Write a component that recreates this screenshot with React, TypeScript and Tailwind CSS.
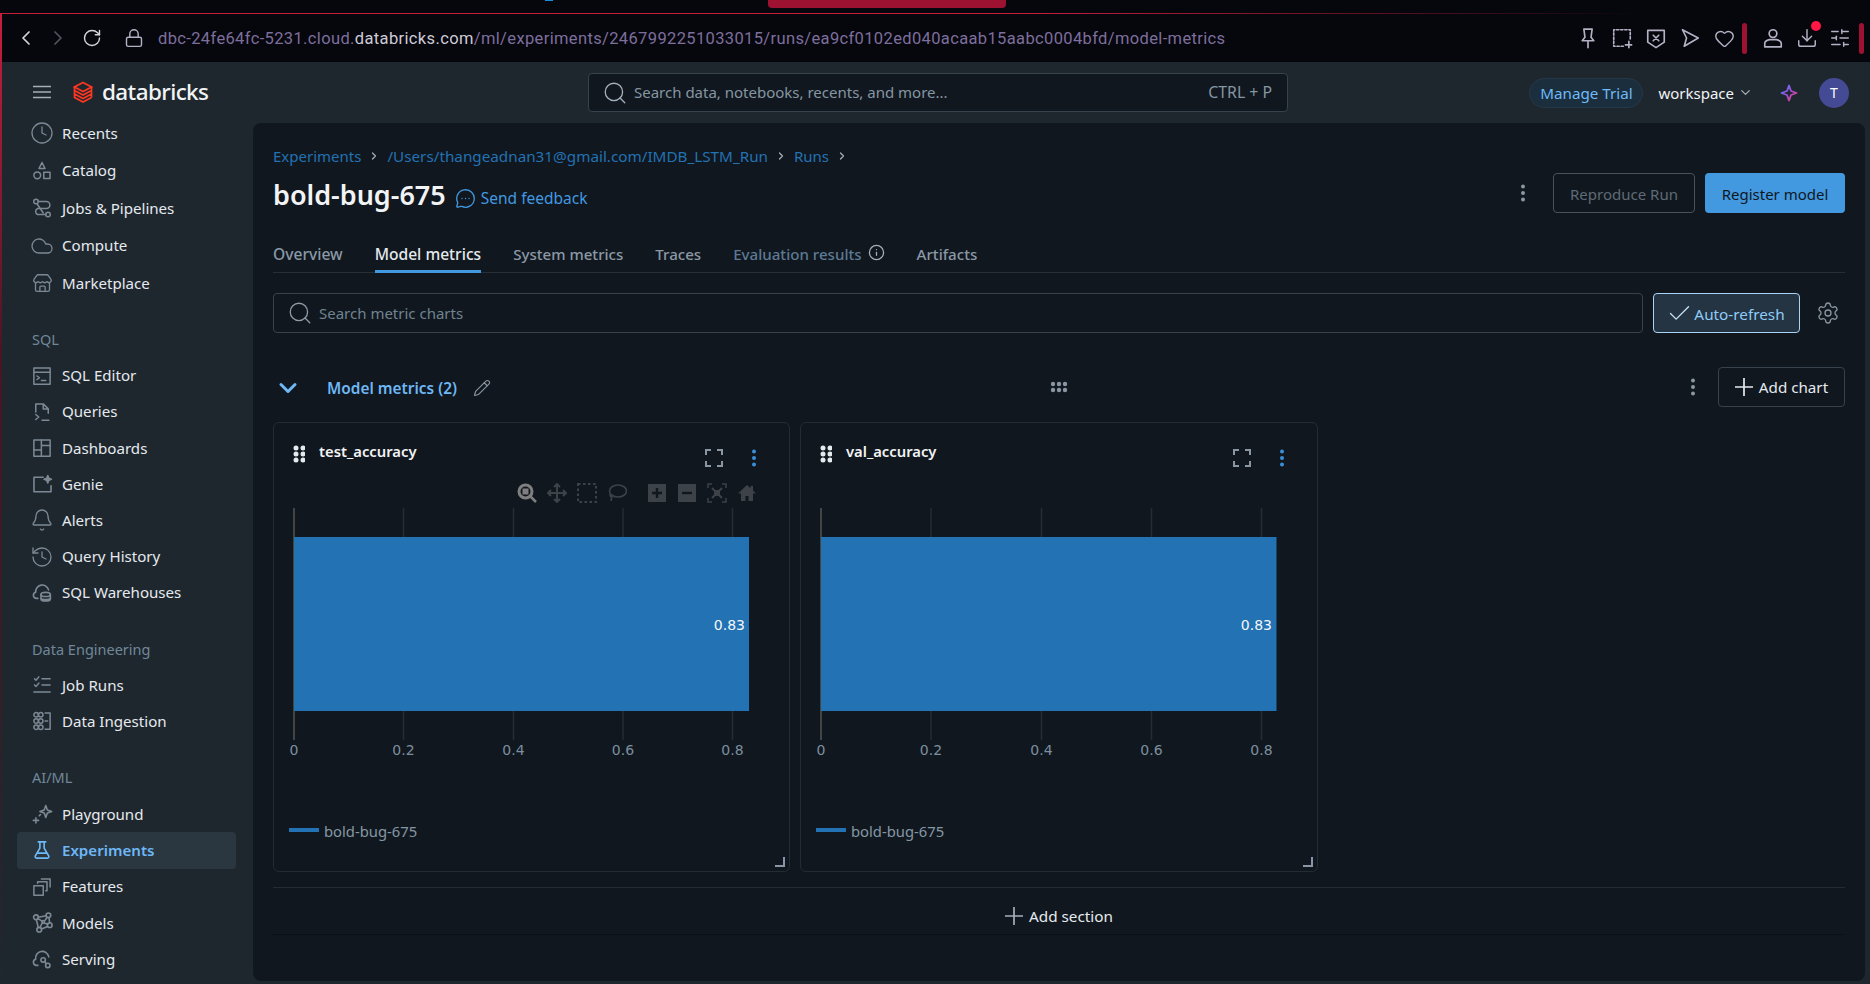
import type { ReactNode } from 'react';
import {
  Bell, Check, ChevronDown, ChevronLeft, ChevronRight, Clock, Cloud, Download, Heart, History, Info,
  Lock, MessageCircleMore, Pencil, RotateCw, Search, Settings, SlidersHorizontal, Store,
} from 'lucide-react';

function Ico({ children, className = 'w-5 h-5' }: { children: ReactNode; className?: string }) {
  return (
    <svg viewBox="0 0 16 16" fill="none" stroke="currentColor" strokeWidth="1.2" strokeLinecap="round" strokeLinejoin="round" className={`shrink-0 ${className}`}>
      {children}
    </svg>
  );
}

const CatalogIcon = () => (
  <Ico><path d="M8 1.2 10.4 6H5.6Z" /><circle cx="4.2" cy="11.4" r="2.7" /><rect x="9.4" y="9" width="5" height="5" /></Ico>
);
const JobsIcon = () => (
  <Ico><circle cx="3.2" cy="2.8" r="1.8" /><circle cx="12.8" cy="13.2" r="1.8" /><path d="M5 2.8h6.5a2.8 2.8 0 0 1 0 5.6h-7a2.6 2.6 0 0 0 0 4.8H11" /><path d="M4 4.6 9 12" /></Ico>
);
const EditorIcon = () => (
  <Ico><rect x="1.5" y="1.5" width="13" height="13" /><path d="M1.5 5h13M4 8l2 1.4L4 10.8M7.5 11.5H11" /></Ico>
);
const QueriesIcon = () => (
  <Ico><path d="M3 8V1.5h6l4 4V9M9 1.5v4h4M3 10l2.4 2L3 14M8 14.5h5.5" /></Ico>
);
const DashboardIcon = () => (
  <Ico><rect x="1.5" y="1.5" width="13" height="13" /><path d="M7.5 1.5v13M1.5 9.5h6M7.5 6h7" /></Ico>
);
const GenieIcon = () => (
  <Ico className="w-[21px] h-[21px]"><path d="M14.5 9v4.5h-13v-11H8.5" /><path d="M12 1.2l.8 2 2 .8-2 .8-.8 2-.8-2-2-.8 2-.8Z" fill="currentColor" /></Ico>
);
const WarehouseIcon = () => (
  <Ico className="w-[21px] h-[21px]"><path d="M4.5 12.5H3.4a2.4 2.4 0 0 1-.6-4.7A5 5 0 0 1 12.6 6" /><ellipse cx="10.4" cy="9.5" rx="3.6" ry="1.6" /><path d="M6.8 9.5v3.4c0 .9 1.6 1.6 3.6 1.6s3.6-.7 3.6-1.6V9.5M6.8 12c0 .9 1.6 1.4 3.6 1.4S14 12.9 14 12" /></Ico>
);
const JobRunsIcon = () => (
  <Ico><path d="M2 3l1.2 1.2L5.5 1.5M8 3h6.5M2 8l1.2 1.2L5.5 6.5M8 8h6.5M1.5 13.5h13" /></Ico>
);
const IngestIcon = () => (
  <Ico><circle cx="3.3" cy="3" r="1.8" /><circle cx="7" cy="3" r="1.8" /><circle cx="3.3" cy="8" r="1.8" /><circle cx="7" cy="8" r="1.8" /><circle cx="3.3" cy="13" r="1.8" /><circle cx="7" cy="13" r="1.8" /><path d="M10.5 1.5h4v13h-4M10.5 8h2" /></Ico>
);
const PlaygroundIcon = () => (
  <Ico className="w-[21px] h-[21px]"><path d="M10.5 1.2l1.2 3.3 3.3 1.2-3.3 1.2-1.2 3.3-1.2-3.3-3.3-1.2 3.3-1.2Z" /><path d="M3 10.5v4M1 12.5h4M5.5 9 6.5 8" /></Ico>
);
const FlaskIcon = () => (
  <Ico><path d="M5 1.5h6M6.3 1.5v5L2.6 12.8a1.2 1.2 0 0 0 1 1.7h8.8a1.2 1.2 0 0 0 1-1.7L9.7 6.5v-5M4.5 10.5h7" strokeWidth="1.3" /></Ico>
);
const FeaturesIcon = () => (
  <Ico><rect x="1.5" y="7" width="7.5" height="7.5" /><path d="M4.5 5V3.8H12V11h-1M7.5 1.5h7V8" /></Ico>
);
const ModelsIcon = () => (
  <Ico className="w-[21px] h-[21px]"><circle cx="3" cy="4" r="1.8" /><circle cx="12.5" cy="2.5" r="1.8" /><circle cx="13.5" cy="10" r="1.8" /><circle cx="5.5" cy="13.5" r="1.8" /><circle cx="8.5" cy="7.5" r="1" /><path d="M4.8 4 10.8 2.8M13 4.3l.4 3.9M12 11l-4.8 2M4.8 11.8 3.3 5.8M4.5 5l3.2 2M9.5 7l2-3M9.3 8.3l2.7 1M7.8 8.3l-1.7 3.5" /></Ico>
);
const ServingIcon = () => (
  <Ico className="w-[21px] h-[21px]"><path d="M4.5 12.5H3.4a2.4 2.4 0 0 1-.6-4.7A5 5 0 0 1 12.8 6" /><circle cx="8.5" cy="8.3" r="1.7" /><circle cx="12" cy="12.5" r="1.7" /><path d="M9.6 9.6l1.3 1.6" /></Ico>
);
const Kebab = ({ className = '' }: { className?: string }) => (
  <svg viewBox="0 0 20 20" fill="currentColor" className={`w-5 h-5 ${className}`}><circle cx="10" cy="3.5" r="2" /><circle cx="10" cy="10" r="2" /><circle cx="10" cy="16.5" r="2" /></svg>
);
const Grip = () => (
  <svg viewBox="0 0 12 18" fill="currentColor" className="w-3 h-[18px] text-[#e5eaef]"><circle cx="3" cy="3" r="2.5" /><circle cx="10" cy="3" r="2.5" /><circle cx="3" cy="9" r="2.5" /><circle cx="10" cy="9" r="2.5" /><circle cx="3" cy="15" r="2.5" /><circle cx="10" cy="15" r="2.5" /></svg>
);
const BigPlus = ({ className = '' }: { className?: string }) => (
  <svg viewBox="0 0 18 18" fill="none" stroke="currentColor" strokeWidth="1.7" className={`h-[18px] w-[18px] ${className}`}><path d="M9 0v18M0 9h18" /></svg>
);

const Logo = () => (
  <svg viewBox="0 0 20 22" fill="none" stroke="#ff3621" strokeWidth="1.7" className="w-5 h-[22px]">
    <path d="M10 1.5 18.5 6 10 10.5 1.5 6Z" />
    <path d="M1.5 6v3.5L10 14l8.5-4.5M1.5 9.5V13L10 17.5 18.5 13M1.5 13v3.5L10 21l8.5-4.5M18.5 6v10.5" />
  </svg>
);

function NavItem({ icon, label, active }: { icon: ReactNode; label: string; active?: boolean }) {
  return (
    <div className={`mx-[17px] flex h-[36.2px] items-center gap-[10px] rounded pl-[15px] ${active ? 'bg-[#2a3640] text-[#6db8f5] font-semibold' : 'text-[#e5eaef]'}`}>
      <span className={`flex w-5 justify-center ${active ? 'text-[#6db8f5]' : 'text-[#7c8994]'}`}>{icon}</span>
      <span className="text-[15.1px]">{label}</span>
    </div>
  );
}

const NavLabel = ({ children, className }: { children: ReactNode; className: string }) => (
  <div className={`ml-[32px] flex h-9 items-center text-[14.5px] text-[#6f8799] ${className}`}>{children}</div>
);

function Sidebar() {
  return (
    <aside className="w-[253px] shrink-0">
      <div className="flex h-[52.5px] items-center pt-[7px] pl-[33px]">
        <svg viewBox="0 0 18 14" className="h-[14px] w-[18px]" stroke="#a5afb8" strokeWidth="1.5"><path d="M0 1.5h18M0 7h18M0 12.5h18" /></svg>
        <span className="ml-[22px]"><Logo /></span>
        <span className="ml-[9px] text-[22.5px] font-medium tracking-[-0.6px] text-[#f1f3f5]">databricks</span>
      </div>
      <div className="[&>div]:h-[37.5px]">
        <NavItem label="Recents" icon={<Clock size={24} strokeWidth={1.3} className="shrink-0" />} />
        <NavItem label="Catalog" icon={<CatalogIcon />} />
        <NavItem label="Jobs & Pipelines" icon={<JobsIcon />} />
        <NavItem label="Compute" icon={<Cloud size={24} strokeWidth={1.3} className="shrink-0" />} />
        <NavItem label="Marketplace" icon={<Store size={21} strokeWidth={1.5} className="shrink-0" />} />
      </div>
      <NavLabel className="mt-[19.5px]">SQL</NavLabel>
      <NavItem label="SQL Editor" icon={<EditorIcon />} />
      <NavItem label="Queries" icon={<QueriesIcon />} />
      <NavItem label="Dashboards" icon={<DashboardIcon />} />
      <NavItem label="Genie" icon={<GenieIcon />} />
      <NavItem label="Alerts" icon={<Bell size={24} strokeWidth={1.3} className="shrink-0" />} />
      <NavItem label="Query History" icon={<History size={24} strokeWidth={1.3} className="shrink-0" />} />
      <NavItem label="SQL Warehouses" icon={<WarehouseIcon />} />
      <NavLabel className="mt-[20px] pt-[2px]">Data Engineering</NavLabel>
      <NavItem label="Job Runs" icon={<JobRunsIcon />} />
      <NavItem label="Data Ingestion" icon={<IngestIcon />} />
      <NavLabel className="mt-[21px]">AI/ML</NavLabel>
      <NavItem label="Playground" icon={<PlaygroundIcon />} />
      <NavItem label="Experiments" active icon={<FlaskIcon />} />
      <NavItem label="Features" icon={<FeaturesIcon />} />
      <NavItem label="Models" icon={<ModelsIcon />} />
      <NavItem label="Serving" icon={<ServingIcon />} />
    </aside>
  );
}

function BrowserBar() {
  return (
    <div className="flex h-[48px] items-center bg-[#06060d] text-[#b5b0c4]">
      <ChevronLeft size={24} strokeWidth={1.7} className="ml-[14px] text-[#d5d3dc]" />
      <ChevronRight size={24} strokeWidth={1.7} className="ml-[8px] text-[#55525f]" />
      <RotateCw size={20} strokeWidth={1.7} className="ml-[12px] text-[#d5d3dc]" />
      <Lock size={20} strokeWidth={1.7} className="ml-[22px] text-[#b5b0c4]" />
      <span className="ml-[14px] pt-[2px] font-['Roboto',sans-serif] text-[16.5px] tracking-[0.36px] text-[#7d6f9c]">
        dbc-24fe64fc-5231.cloud.<span className="text-[#cfccd6]">databricks.com</span>/ml/experiments/2467992251033015/runs/ea9cf0102ed040acaab15aabc0004bfd/model-metrics
      </span>
      <div className="ml-auto flex items-center">
        <Ico className="h-[22px] w-[22px]"><path d="M5 1.5h6l-.8 6 2 2.5H3.8l2-2.5ZM8 10v5" /></Ico>
        <Ico className="ml-[12px] h-[22px] w-[22px]"><path d="M9 14H2V2h12v7" strokeDasharray="1.7 1.3" /><path d="M13 10.5v4.5M10.5 13H15" /></Ico>
        <Ico className="ml-[12px] h-[22px] w-[22px]"><path d="M2 2.5h12v8.5L8 15 2 11Z" /><path d="M6 6l4 4M10 6l-4 4" /></Ico>
        <Ico className="ml-[12px] h-[22px] w-[22px]"><path d="M2.5 2 14 8 3.8 14 5.5 8Z" /></Ico>
        <Heart size={21} strokeWidth={1.6} className="ml-[13px]" />
        <div className="ml-[7px] h-[31px] w-[5px] rounded-sm bg-[#9c1230]" />
        <Ico className="ml-[15px] h-[22px] w-[22px]"><circle cx="8" cy="4.8" r="2.8" /><path d="M2 14.5V12c0-2 2-2.5 3.5-2.8h5c1.5.3 3.5.8 3.5 2.8v2.5Z" /></Ico>
        <span className="relative ml-[12px]">
          <Download size={22} strokeWidth={1.6} />
          <span className="absolute -right-[3px] -top-[6px] h-[10px] w-[10px] rounded-full bg-[#ff1745]" />
        </span>
        <SlidersHorizontal size={22} strokeWidth={1.6} className="ml-[11px]" />
        <div className="ml-[8px] mr-[6px] h-[31px] w-[5px] rounded-sm bg-[#9c1230]" />
      </div>
    </div>
  );
}

function TopBar() {
  return (
    <div className="flex h-[61px] items-center pr-[21px]">
      <div className="ml-[335px] flex h-[39px] w-[700px] items-center rounded border border-[#37424d] bg-[#11171e] pl-[13px] pr-[15px] text-[15px] text-[#8596a3]">
        <Search size={26} strokeWidth={1.2} className="text-[#a5b1bb]" />
        <span className="ml-[6px]">Search data, notebooks, recents, and more...</span>
        <span className="ml-auto text-[15.8px]">CTRL + P</span>
      </div>
      <div className="ml-auto flex h-[30px] w-[114px] items-center justify-center rounded-full border border-[#243848] bg-[#1b2e3d] pt-[1px] text-[15.2px] text-[#6fbaf7]">Manage Trial</div>
      <span className="ml-[15px] pt-[1px] text-[15px] text-[#f1f3f5]">workspace</span>
      <ChevronDown size={15} strokeWidth={2} className="ml-[4px] text-[#a5afb8]" />
      <svg viewBox="0 0 18 18" className="ml-[27px] h-[18px] w-[18px]" fill="none" strokeWidth="1.8">
        <defs><linearGradient id="spark" x1="0" y1="0" x2="1" y2="1"><stop offset="0" stopColor="#4c7dff" /><stop offset="0.5" stopColor="#a24fd8" /><stop offset="1" stopColor="#ff3a6e" /></linearGradient></defs>
        <path d="M9 1.5 11 7l5.5 2L11 11l-2 5.5L7 11 1.5 9 7 7Z" stroke="url(#spark)" strokeLinejoin="round" />
      </svg>
      <span className="ml-[21px] flex h-[30px] w-[30px] items-center justify-center rounded-full bg-[#444b94] text-[14px] text-white">T</span>
    </div>
  );
}

const Crumb = () => <ChevronRight size={12} strokeWidth={2.5} className="mx-[7px] text-[#a5afb8]" />;

function PageHead() {
  return (
    <>
      <div className="flex h-5 items-center text-[15.25px] text-[#2272b4]">
        <span className="text-[15px]">Experiments</span>
        <Crumb />
        <span>/Users/thangeadnan31@gmail.com/IMDB_LSTM_Run</span>
        <Crumb />
        <span className="text-[15px]">Runs</span>
        <Crumb />
      </div>
      <div className="mt-[7px] flex h-10 items-center">
        <span className="mt-[5px] text-[27px] font-semibold text-[#f1f3f5]">bold-bug-675</span>
        <MessageCircleMore size={21} strokeWidth={1.5} className="ml-[9px] mt-[10px] text-[#4299e0]" />
        <span className="ml-[5px] mt-[12px] text-[15.5px] text-[#4299e0]">Send feedback</span>
        <Kebab className="ml-auto mr-[20px] text-[#8a96a1]" />
        <div className="flex h-10 w-[142px] items-center justify-center rounded border border-[#47525c] pt-[2px] text-[15px] text-[#5f6b76]">Reproduce Run</div>
        <div className="ml-[10px] flex h-10 w-[140px] items-center justify-center rounded bg-[#4299e0] pt-[2px] text-[15px] text-[#11171e]">Register model</div>
      </div>
      <div className="mt-[22px] flex h-[38px] gap-[32px] border-b border-[#262e36] text-[15.1px] font-medium text-[#8a99a6]">
        <span className="pt-[8px] text-[15.6px]">Overview</span>
        <span className="h-[38px] border-b-[3px] border-[#4299e0] pt-[8px] text-[15.6px] text-[#e5eaef]">Model metrics</span>
        <span className="pt-[8px]">System metrics</span>
        <span className="pt-[8px]">Traces</span>
        <span className="flex items-start gap-[6px] pt-[8px] text-[#5d7a94]">
          Evaluation results
          <Info size={17} strokeWidth={1.8} className="mt-[1px] text-[#a5afb8]" />
        </span>
        <span className="pt-[8px]">Artifacts</span>
      </div>
    </>
  );
}

function Toolbar() {
  return (
    <div className="mt-5 flex h-10">
      <div className="flex flex-1 items-center rounded border border-[#37424d] pl-[13px] text-[15px] text-[#6f8391]">
        <Search size={26} strokeWidth={1.2} className="text-[#8f9ba5]" />
        <span className="ml-[6px] pt-[1px]">Search metric charts</span>
      </div>
      <div className="ml-[10px] flex w-[147px] items-center justify-center rounded border border-[#a9d4f5] bg-[#243442] pr-[2px] text-[15.3px] text-[#8fcbf8]">
        <Check size={27} strokeWidth={1.2} className="mr-[1px] text-[#c5e1f7]" />
        <span className="pt-[2px]">Auto-refresh</span>
      </div>
      <div className="flex w-[45px] items-center justify-end pr-[5px]">
        <Settings size={24} strokeWidth={1.3} className="text-[#8a96a1]" />
      </div>
    </div>
  );
}

function SectionHead() {
  return (
    <div className="mt-[34px] flex h-10 items-center">
      <div className="flex flex-1 items-center">
        <ChevronDown size={28} strokeWidth={2.6} className="ml-[1px] mt-[2px] text-[#6db8f5]" />
        <span className="ml-[25px] mt-[4px] text-[15.4px] font-semibold text-[#6db8f5]">Model metrics (2)</span>
        <Pencil size={18} strokeWidth={1.5} className="ml-[16px] mt-[2px] text-[#8a96a1]" />
      </div>
      <svg viewBox="0 0 18 12" fill="#8a96a1" className="h-3 w-[18px]">
        <circle cx="3" cy="3" r="2.2" /><circle cx="9" cy="3" r="2.2" /><circle cx="15" cy="3" r="2.2" />
        <circle cx="3" cy="9" r="2.2" /><circle cx="9" cy="9" r="2.2" /><circle cx="15" cy="9" r="2.2" />
      </svg>
      <div className="flex flex-1 items-center justify-end">
        <Kebab className="mr-[15px] text-[#8a96a1]" />
        <div className="flex h-10 w-[127px] items-center justify-center gap-[6px] rounded border border-[#37424d] text-[15.2px] text-[#e5eaef]">
          <BigPlus />
          Add chart
        </div>
      </div>
    </div>
  );
}

function ModeBar() {
  const dim = 'h-5 w-5 text-[#3d4249]';
  return (
    <div className="absolute right-[32px] top-[60px] flex gap-[10px]">
      <svg viewBox="0 0 20 20" className="h-5 w-5" fill="none"><circle cx="8.5" cy="8.5" r="6.5" stroke="#7f7f7f" strokeWidth="3" /><rect x="5.5" y="5.5" width="6" height="6" fill="#7f7f7f" /><path d="M13 13l6 6" stroke="#7f7f7f" strokeWidth="2.5" /></svg>
      <svg viewBox="0 0 20 20" className={dim} fill="none" stroke="currentColor" strokeWidth="2"><path d="M10 1v18M1 10h18" /><path d="M7 4l3-3 3 3M7 16l3 3 3-3M4 7l-3 3 3 3M16 7l3 3-3 3" fill="currentColor" /></svg>
      <svg viewBox="0 0 20 20" className={dim} fill="none" stroke="currentColor" strokeWidth="2" strokeDasharray="2.5 2.5"><rect x="1" y="1" width="18" height="18" /></svg>
      <svg viewBox="0 0 20 20" className={`${dim} mr-[10px]`} fill="none" stroke="currentColor" strokeWidth="1.6"><ellipse cx="11" cy="8" rx="8.5" ry="6" /><path d="M3.5 11c-1 2 .5 3.5 2 3M5 13l-1 5" /></svg>
      <svg viewBox="0 0 20 20" className={dim}><rect x="1" y="1" width="18" height="18" fill="currentColor" /><path d="M10 5v10M5 10h10" stroke="#11171e" strokeWidth="2.4" /></svg>
      <svg viewBox="0 0 20 20" className={dim}><rect x="1" y="1" width="18" height="18" fill="currentColor" /><path d="M5 10h10" stroke="#11171e" strokeWidth="2.4" /></svg>
      <svg viewBox="0 0 20 20" className={dim} fill="none" stroke="currentColor" strokeWidth="1.5"><path d="M1 5V1h4M15 1h4v4M19 15v4h-4M5 19H1v-4" /><path d="M5 5l10 10M15 5 5 15" strokeWidth="2" /><rect x="7" y="7" width="6" height="6" fill="currentColor" stroke="none" /></svg>
      <svg viewBox="0 0 20 20" className={dim} fill="currentColor"><path d="M10 2 1 10.5h3V18h4.5v-5h3v5H16v-7.5h3l-3-2.9V3h-2.5v2.2Z" /></svg>
    </div>
  );
}

function Plot({ grid, axis, barEnd, valueEnd }: { grid: number[]; axis: number; barEnd: number; valueEnd: number }) {
  const ticks = ['0.2', '0.4', '0.6', '0.8'];
  return (
    <svg width="500" height="252" className="block font-['DejaVu_Sans',sans-serif]">
      {grid.map((x) => <line key={x} x1={x} x2={x} y1="0" y2="232" stroke="#262c33" strokeWidth="1.5" />)}
      <line x1={axis} x2={axis} y1="0" y2="232" stroke="#444" strokeWidth="2" />
      <rect x={axis} y="29" width={barEnd - axis} height="174" fill="#2272b4" />
      <text x={valueEnd} y="122" textAnchor="end" fontSize="14" fill="#f5f7f9">0.83</text>
      <text x={axis} y="247" textAnchor="middle" fontSize="14" fill="#7b8f9f">0</text>
      {grid.map((x, i) => <text key={x} x={x} y="247" textAnchor="middle" fontSize="14" fill="#7b8f9f">{ticks[i]}</text>)}
    </svg>
  );
}

function ChartCard({ title, width, toolbar, ...plot }: {
  title: string; width: string; toolbar?: boolean;
  grid: number[]; axis: number; barEnd: number; valueEnd: number;
}) {
  return (
    <div className={`relative h-[450px] rounded-md border border-[#232b33] ${width}`}>
      <div className="flex h-[85px] items-start pl-[19px] pr-[25px]">
        <span className="mt-[22px]"><Grip /></span>
        <span className="ml-[14px] mt-[17px] text-[14.8px] font-semibold text-[#f1f3f5]">{title}</span>
        <svg viewBox="0 0 18 18" fill="none" stroke="#8a96a1" strokeWidth="2" className="ml-auto mt-[26px] h-[18px] w-[18px]">
          <path d="M1 6V1h5M12 1h5v5M17 12v5h-5M6 17H1v-5" />
        </svg>
        <Kebab className="ml-[21px] mt-[25px] text-[#3a8fd8]" />
      </div>
      {toolbar && <ModeBar />}
      <Plot {...plot} />
      <div className="ml-[15px] mt-[59px] flex h-6 items-center gap-[5px] text-[14.8px] text-[#8597a5]">
        <span className="-mt-[2px] h-1 w-[30px] bg-[#2272b4]" />
        bold-bug-675
      </div>
      <span className="absolute bottom-[4px] right-[4px] h-[10px] w-[10px] border-b-2 border-r-2 border-[#8a96a8]" />
    </div>
  );
}

export default function App() {
  return (
    <div className="relative flex h-screen w-full flex-col overflow-hidden bg-[#1f272e] font-['Noto_Sans',sans-serif]">
      <div className="flex h-[13px] items-start bg-[#06060d]">
        <span className="ml-[545px] h-[1px] w-2 bg-[#1a8fe0]" />
        <span className="ml-[215px] h-2 w-[238px] rounded-b bg-[#9c1230]" />
      </div>
      <div className="h-[1px] bg-[linear-gradient(90deg,#c81e3e_0%,#c81e3e_55%,#06060d_88%)]" />
      <BrowserBar />
      <div className="flex min-h-0 flex-1">
        <Sidebar />
        <div className="flex min-w-0 flex-1 flex-col">
          <TopBar />
          <main className="mb-[3px] mr-[5px] flex-1 rounded-lg bg-[#11171e] px-5 pt-[23px]">
            <PageHead />
            <Toolbar />
            <SectionHead />
            <div className="mt-[15px] flex gap-[10px]">
              <ChartCard title="test_accuracy" width="w-[517px]" toolbar axis={20} grid={[129.5, 239.5, 349, 458.5]} barEnd={475} valueEnd={471} />
              <ChartCard title="val_accuracy" width="w-[518px]" axis={20} grid={[130, 240.5, 350.5, 460.5]} barEnd={475.5} valueEnd={471} />
            </div>
            <div className="mt-[15px] flex h-12 items-center justify-center gap-[6px] border-y border-b-[#0c1015] border-t-[#232b33] pt-[10px] text-[15.3px] text-[#e5eaef]">
              <BigPlus className="text-[#a5afb8]" />
              Add section
            </div>
          </main>
        </div>
      </div>
      <div className="absolute bottom-0 left-0 top-[13px] w-[2px] bg-[linear-gradient(180deg,#c81e3e_0%,#4a1525_35%,#1f272e_100%)]" />
    </div>
  );
}
